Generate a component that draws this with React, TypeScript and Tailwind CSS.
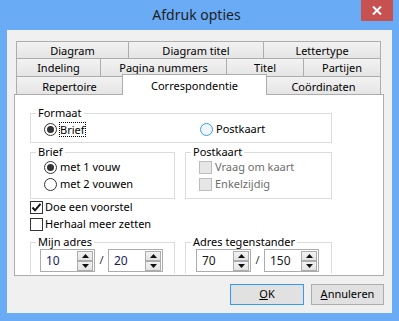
import React from "react";

function Radio({ checked = false, hover = false }: { checked?: boolean; hover?: boolean }) {
  return (
    <span
      className={
        hover
          ? "w-[13px] h-[13px] rounded-full border border-[#3c9de5] bg-[#eef6fd] flex items-center justify-center shrink-0"
          : "w-[13px] h-[13px] rounded-full border border-[#333333] bg-white flex items-center justify-center shrink-0"
      }
    >
      {checked && <span className="w-[7px] h-[7px] rounded-full bg-[#333333]" />}
    </span>
  );
}

function Check({ checked = false, disabled = false }: { checked?: boolean; disabled?: boolean }) {
  return (
    <span
      className={
        disabled
          ? "w-[13px] h-[13px] border border-[#bcbcbc] bg-[#e6e6e6] flex items-center justify-center shrink-0"
          : "w-[13px] h-[13px] border border-[#333333] bg-white flex items-center justify-center shrink-0"
      }
    >
      {checked && (
        <svg width="11" height="11" viewBox="0 0 11 11">
          <path d="M1.5 5.5 L4 8.3 L9.5 1.8" fill="none" stroke="#111" strokeWidth="2" />
        </svg>
      )}
    </span>
  );
}

function Spin({ value, color }: { value: string; color: string }) {
  return (
    <div className="w-[55px] h-[23px] border border-[#acacac] bg-white flex items-start pt-px pr-px shrink-0">
      <div className={"flex-1 h-[20px] flex items-center pl-[5px] text-[12px] " + color}>{value}</div>
      <div className="flex flex-col w-[16px]">
        <div className="h-[10px] border border-[#acacac] bg-linear-to-b from-[#f2f2f2] to-[#e3e3e3] flex items-center justify-center">
          <svg width="7" height="4" viewBox="0 0 7 4">
            <path d="M0 4 L3.5 0 L7 4 Z" fill="#111" />
          </svg>
        </div>
        <div className="h-[10px] border border-[#acacac] bg-linear-to-b from-[#f2f2f2] to-[#e3e3e3] flex items-center justify-center">
          <svg width="7" height="4" viewBox="0 0 7 4">
            <path d="M0 0 L7 0 L3.5 4 Z" fill="#111" />
          </svg>
        </div>
      </div>
    </div>
  );
}

const tab =
  "border border-[#adadad] bg-linear-to-b from-[#f2f2f2] to-[#e5e5e5] flex items-center justify-center shrink-0 text-[11px] leading-none";

export default function App() {
  return (
    <div className="w-[399px] h-[321px] bg-[#6aabf5] flex flex-col font-['Noto_Sans',sans-serif] text-[11px] text-black">
      {/* title bar */}
      <div className="h-[30px] flex items-start shrink-0">
        <div className="flex-1" />
        <div className="pt-[5px] text-[14px] leading-[19px] text-[#1e1e1e]">Afdruk opties</div>
        <div className="flex-1 flex justify-end pr-[6px]">
          <div className="w-[32px] h-[21px] bg-[#c75050] flex items-center justify-center">
            <svg width="10" height="9" viewBox="0 0 10 9">
              <path d="M1 0.5 L9 8.5 M9 0.5 L1 8.5" stroke="white" strokeWidth="2" />
            </svg>
          </div>
        </div>
      </div>

      {/* client */}
      <div className="mx-[7px] h-[283px] bg-[#f0f0f0] flex flex-col pt-[11px] shrink-0">
        {/* tabs */}
        <div className="ml-[9px] flex flex-col">
          <div className="flex h-[18px]">
            <div className={tab + " w-[113px]"}>Diagram</div>
            <div className={tab + " w-[136px] -ml-px"}>Diagram titel</div>
            <div className={tab + " w-[118px] -ml-px"}>Lettertype</div>
          </div>
          <div className="flex h-[19px] -mt-px">
            <div className={tab + " w-[85px]"}>Indeling</div>
            <div className={tab + " w-[127px] -ml-px"}>Pagina nummers</div>
            <div className={tab + " w-[78px] -ml-px"}>Titel</div>
            <div className={tab + " w-[78px] -ml-px"}>Partijen</div>
          </div>
          <div className="flex h-[21px] -mt-[3px] items-end">
            <div className={tab + " w-[107px] h-[19px] pt-[2px]"}>Repertoire</div>
            <div className="w-[145px] h-[21px] -ml-px border border-b-0 border-[#adadad] bg-white flex items-center justify-center shrink-0 relative z-10 text-[11px] leading-none">
              Correspondentie
            </div>
            <div className={tab + " w-[115px] h-[19px] -ml-px pt-[2px]"}>Coördinaten</div>
          </div>
        </div>

        {/* panel */}
        <div className="ml-[7px] w-[370px] h-[182px] -mt-px border border-[#adadad] bg-white overflow-hidden flex flex-col pl-[15px] pt-[11px]">
          {/* Formaat */}
          <fieldset className="m-0 p-0 min-w-0 w-[302px] border border-[#dcdcdc] pb-[5px] shrink-0">
            <legend className="ml-[5px] px-[2px] leading-[14px]">Formaat</legend>
            <div className="flex h-[16px] items-center mt-px pl-[13px]">
              <div className="w-[156px] flex items-center">
                <Radio checked />
                <span className="ml-[2px] border border-dotted border-black leading-[13px]">Brief</span>
              </div>
              <div className="flex items-center">
                <Radio hover />
                <span className="ml-[3px]">Postkaart</span>
              </div>
            </div>
          </fieldset>

          <div className="flex mt-[2px] shrink-0">
            <fieldset className="m-0 p-0 min-w-0 w-[145px] border border-[#dcdcdc] pb-[5px]">
              <legend className="ml-[5px] px-[2px] leading-[14px]">Brief</legend>
              <div className="flex flex-col pl-[13px]">
                <div className="flex h-[17px] items-center">
                  <Radio checked />
                  <span className="ml-[3px]">met 1 vouw</span>
                </div>
                <div className="flex h-[17px] items-center">
                  <Radio />
                  <span className="ml-[3px]">met 2 vouwen</span>
                </div>
              </div>
            </fieldset>
            <fieldset className="m-0 p-0 min-w-0 ml-[10px] w-[147px] border border-[#dcdcdc] pb-[5px]">
              <legend className="ml-[5px] px-[2px] leading-[14px]">Postkaart</legend>
              <div className="flex flex-col pl-[13px] text-[#6d6d6d]">
                <div className="flex h-[17px] items-center">
                  <Check disabled />
                  <span className="ml-[3px]">Vraag om kaart</span>
                </div>
                <div className="flex h-[17px] items-center">
                  <Check disabled />
                  <span className="ml-[3px]">Enkelzijdig</span>
                </div>
              </div>
            </fieldset>
          </div>

          <div className="flex h-[17px] items-center shrink-0">
            <Check checked />
            <span className="ml-[2px]">Doe een voorstel</span>
          </div>
          <div className="flex h-[17px] items-center shrink-0">
            <Check />
            <span className="ml-[2px]">Herhaal meer zetten</span>
          </div>

          <div className="flex mt-[2px] shrink-0">
            <fieldset className="m-0 p-0 min-w-0 w-[145px] h-[39px] border border-[#dcdcdc] border-b-transparent">
              <legend className="ml-[5px] px-[2px] leading-[14px]">Mijn adres</legend>
              <div className="flex items-center pl-[9px]">
                <Spin value="10" color="text-[#211a5c]" />
                <span className="w-[13px] text-center text-[#333]">/</span>
                <Spin value="20" color="text-[#211a5c]" />
              </div>
            </fieldset>
            <fieldset className="m-0 p-0 min-w-0 ml-[10px] w-[147px] h-[39px] border border-[#dcdcdc] border-b-transparent">
              <legend className="ml-[5px] px-[2px] leading-[14px]">Adres tegenstander</legend>
              <div className="flex items-center pl-[10px]">
                <Spin value="70" color="text-[#1a1a1a]" />
                <span className="w-[13px] text-center text-[#333]">/</span>
                <Spin value="150" color="text-[#1a1a1a]" />
              </div>
            </fieldset>
          </div>
        </div>

        {/* buttons */}
        <div className="flex justify-end gap-[7px] pr-[8px] mt-[8px]">
          <div className="w-[74px] h-[21px] border border-[#3399ff] bg-[#e1e1e1] flex items-center justify-center">
            <span><span className="underline">O</span>K</span>
          </div>
          <div className="w-[73px] h-[21px] border border-[#adadad] bg-[#e1e1e1] flex items-center justify-center">
            <span><span className="underline">A</span>nnuleren</span>
          </div>
        </div>
      </div>
    </div>
  );
}
